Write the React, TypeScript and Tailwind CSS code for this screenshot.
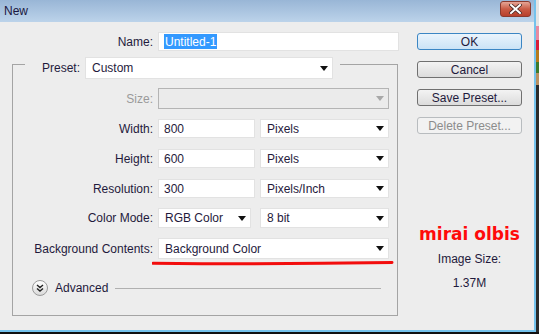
import type { ReactNode } from "react";

const font = { fontFamily: '"Liberation Sans", Arial, sans-serif' };

function Arrow({ disabled }: { disabled?: boolean }) {
  return (
    <svg width="8" height="5" viewBox="0 0 8 5" className="shrink-0">
      <polygon points="0,0 8,0 4,5" fill={disabled ? "#a8a8a8" : "#111"} />
    </svg>
  );
}

function Select({ w, h = 20, value, pl = 6 }: { w: string; h?: number; value: string; pl?: number }) {
  return (
    <div
      className={`${w} flex items-center justify-between bg-white border border-[#e2e2e2] pr-[4px] text-[#1f1a3c]`}
      style={{ height: h, paddingLeft: pl }}
    >
      <span>{value}</span>
      <Arrow />
    </div>
  );
}

function Input({ w, value }: { w: string; value: ReactNode }) {
  return (
    <div className={`${w} h-[19px] flex items-center bg-white border border-[#e2e2e2] pl-[5px] text-[#1f1a3c]`}>
      {value}
    </div>
  );
}

function Row({ label, children, mt, muted }: { label: string; children: ReactNode; mt: string; muted?: boolean }) {
  return (
    <div className={`flex items-center ${mt}`}>
      <div className={`w-[140px] text-right ${muted ? "text-[#9a9a9a]" : "text-[#1f1a3c]"}`}>{label}</div>
      <div className="ml-[5px] flex items-center">{children}</div>
    </div>
  );
}

function Button({ label, primary, disabled }: { label: string; primary?: boolean; disabled?: boolean }) {
  const cls = primary
    ? "border-[#3b86c4] bg-gradient-to-b from-[#eaf4fc] to-[#cbe3f6] text-[#1f1a3c]"
    : disabled
    ? "border-[#b8bcbf] bg-[#f2f2f2] text-[#8c8c8c]"
    : "border-[#707070] bg-gradient-to-b from-[#f3f3f3] to-[#dcdcdc] text-[#1f1a3c]";
  return (
    <div className={`w-[105px] h-[17px] rounded-[3px] border flex items-center justify-center ${cls}`}>{label}</div>
  );
}

export default function App() {
  return (
    <div className="w-[539px] h-[334px] bg-[#151515] overflow-hidden flex flex-col text-[12px] leading-none" style={font}>
      <div className="flex">
        <div className="w-[536px] h-[332px] flex flex-col bg-[#ededed] border-r-2 border-b-2 border-[#74c2ec]">
          {/* title bar */}
          <div className="h-[22px] shrink-0 flex items-center justify-between bg-gradient-to-b from-[#99b6d6] to-[#bcd3ea] pl-[4px] pr-[3px]">
            <span className="text-[12px] text-[#1a1740]">New</span>
            <div className="w-[31px] h-[16px] mb-[4px] rounded-[3px] border border-[#8a3a2e] bg-gradient-to-b from-[#e4a596] via-[#c95b45] to-[#b8402c] flex items-center justify-center">
              <svg width="13" height="10" viewBox="0 0 13 10">
                <path d="M2 1 L11 9 M11 1 L2 9" stroke="#4a2a25" strokeWidth="3.6" strokeLinecap="square" />
                <path d="M2 1 L11 9 M11 1 L2 9" stroke="#fff" strokeWidth="2" strokeLinecap="square" />
              </svg>
            </div>
          </div>

          <div className="flex flex-1">
            {/* left part */}
            <div className="w-[417px] flex flex-col">
              <div className="flex items-center mt-[10px]">
                <div className="w-[153px] text-right text-[#1f1a3c]">Name:</div>
                <div className="ml-[5px] w-[241px] h-[19px] flex items-center bg-white border border-[#e2e2e2] pl-[5px]">
                  <span className="bg-[#3399ff] text-white h-[15px] px-[1px] flex items-center">Untitled-1</span>
                </div>
              </div>

              {/* group box */}
              <div className="ml-[12px] mt-[13px] w-[386px] border border-[#a4a4a4] border-t-0 flex flex-col pb-[19px]">
                <div className="flex items-start">
                  <div className="w-[12px] border-t border-[#a4a4a4]" />
                  <div className="mt-[-7px] flex items-center bg-[#ededed] pl-[17px] pr-[7px]">
                    <span className="text-[#1f1a3c]">Preset:</span>
                    <div className="ml-[5px]">
                      <Select w="w-[248px]" h={22} value="Custom" />
                    </div>
                  </div>
                  <div className="flex-1 border-t border-[#a4a4a4]" />
                </div>

                <Row label="Size:" mt="mt-[9px]" muted>
                  <div className="w-[231px] h-[21px] flex items-center justify-end pr-[4px] bg-[#ebebeb] border border-[#b4b4b4]">
                    <Arrow disabled />
                  </div>
                </Row>
                <Row label="Width:" mt="mt-[10px]">
                  <Input w="w-[97px]" value="800" />
                  <div className="ml-[5px]">
                    <Select w="w-[129px]" h={19} value="Pixels" />
                  </div>
                </Row>
                <Row label="Height:" mt="mt-[11px]">
                  <Input w="w-[97px]" value="600" />
                  <div className="ml-[5px]">
                    <Select w="w-[129px]" h={19} value="Pixels" />
                  </div>
                </Row>
                <Row label="Resolution:" mt="mt-[11px]">
                  <Input w="w-[97px]" value="300" />
                  <div className="ml-[5px]">
                    <Select w="w-[129px]" h={19} value="Pixels/Inch" />
                  </div>
                </Row>
                <Row label="Color Mode:" mt="mt-[10px]">
                  <Select w="w-[93px]" h={20} value="RGB Color" />
                  <div className="ml-[9px]">
                    <Select w="w-[129px]" h={20} value="8 bit" />
                  </div>
                </Row>
                <div className="relative">
                  <Row label="Background Contents:" mt="mt-[10px]">
                    <Select w="w-[231px]" h={21} value="Background Color" />
                  </Row>
                  <svg className="absolute left-[139px] top-[33px]" width="242" height="5" viewBox="0 0 242 5">
                    <path d="M1 2.2 Q120 3.6 240 1.6" stroke="#f20d0d" strokeWidth="3" strokeLinecap="round" fill="none" />
                  </svg>
                </div>

                <div className="flex items-center mt-[21px] ml-[19px] mr-[16px]">
                  <div className="w-[16px] h-[16px] rounded-full border border-[#9a9a9a] bg-gradient-to-b from-white to-[#dadada] flex items-center justify-center">
                    <svg width="8" height="8" viewBox="0 0 8 8">
                      <path d="M1 1 L4 3.5 L7 1 M1 4.5 L4 7 L7 4.5" stroke="#222" strokeWidth="1.4" fill="none" />
                    </svg>
                  </div>
                  <span className="ml-[7px] text-[#1f1a3c]">Advanced</span>
                  <div className="flex-1 ml-[7px] border-t border-[#b0b0b0]" />
                </div>
              </div>
            </div>

            {/* right part */}
            <div className="w-[105px] flex flex-col items-center">
              <div className="mt-[11px] flex flex-col gap-[11px]">
                <Button label="OK" primary />
                <Button label="Cancel" />
                <Button label="Save Preset..." />
                <Button label="Delete Preset..." disabled />
              </div>
              <div
                className="mt-[90px] h-[20px] flex items-center text-[17px] font-bold text-[#ff0a0a]"
                style={{ fontFamily: '"DejaVu Sans", Verdana, sans-serif' }}
              >
                mirai olbis
              </div>
              <div className="mt-[7px] h-[16px] flex items-center text-[#1f1a3c]">Image Size:</div>
              <div className="mt-[8px] h-[16px] flex items-center text-[#1f1a3c]">1.37M</div>
            </div>
          </div>
        </div>

        <div className="w-[3px] flex flex-col">
          <div className="h-[26px] bg-[#e4e4e4]" />
          <div className="h-[14px] bg-[#e88aa0]" />
          <div className="h-[10px] bg-[#d81e3a]" />
          <div className="h-[12px] bg-[#b57a1c]" />
          <div className="h-[11px] bg-[#3d7a2a]" />
          <div className="h-[12px] bg-[#b89060]" />
          <div className="flex-1 bg-[#2a2a2a]" />
        </div>
      </div>
      <div className="flex-1 bg-[#111]" />
    </div>
  );
}
